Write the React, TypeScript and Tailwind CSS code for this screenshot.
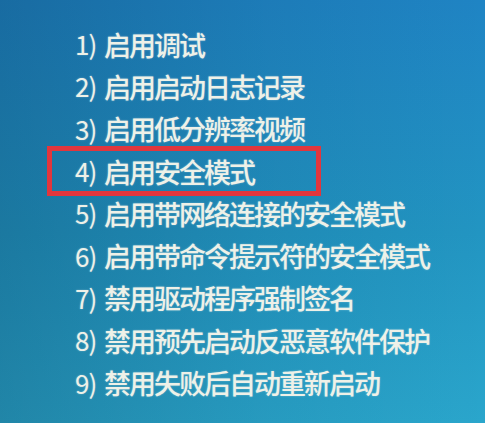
import React from "react"

const options = [
  "启用调试",
  "启用启动日志记录",
  "启用低分辨率视频",
  "启用安全模式",
  "启用带网络连接的安全模式",
  "启用带命令提示符的安全模式",
  "禁用驱动程序强制签名",
  "禁用预先启动反恶意软件保护",
  "禁用失败后自动重新启动",
]

// 高亮第 4 项（安全模式）
const HIGHLIGHT = 3

function Row({ n, label }: { n: number; label: string }) {
  return (
    <>
      <span className="w-[29px] shrink-0 text-[26px] font-normal tracking-[-1px]">{n})</span>
      <span className="tracking-[-2px]">{label}</span>
    </>
  )
}

export default function App() {
  return (
    <div className="w-[485px] h-[423px] overflow-hidden bg-[linear-gradient(to_right,rgba(0,20,40,0.22),rgba(0,20,40,0.08)_55%,transparent),linear-gradient(to_bottom,#1f84c4,#2295c2_55%,#2aa6cc)] pt-[23px] pl-[75px] font-['Noto_Sans_CJK_SC','Noto_Sans',sans-serif] text-[27px] font-medium text-[#eef1e8] [text-shadow:0_0_2px_rgba(255,255,255,0.35)]">
      <ul className="flex flex-col">
        {options.map((label, i) =>
          i === HIGHLIGHT ? (
            <li
              key={i}
              className="flex items-center h-[50px] -my-[3.85px] -ml-[28px] pl-[23px] w-[274px] border-[5px] border-[#e2363d] leading-none"
            >
              <Row n={i + 1} label={label} />
            </li>
          ) : (
            <li key={i} className="flex items-center h-[42.3px] leading-none">
              <Row n={i + 1} label={label} />
            </li>
          )
        )}
      </ul>
    </div>
  )
}
